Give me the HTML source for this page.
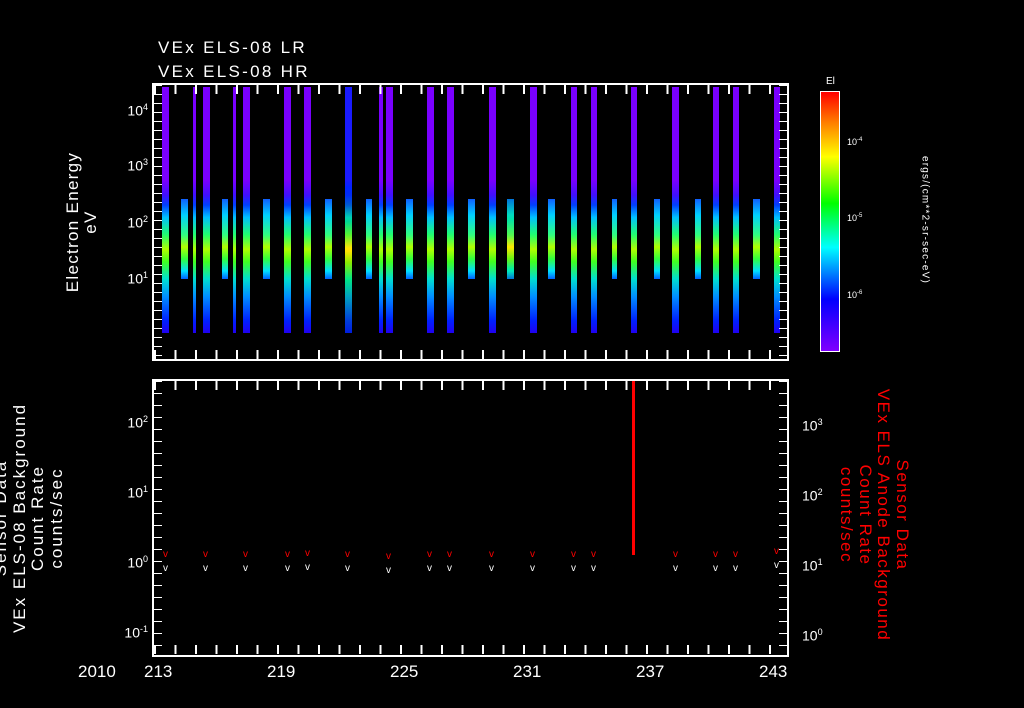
<!DOCTYPE html>
<html><head><meta charset="utf-8"><style>
body{margin:0;background:#000;width:1024px;height:708px;overflow:hidden;position:relative;font-family:"Liberation Sans",sans-serif;color:#fff}
div{position:absolute}
.t{white-space:nowrap;font-size:16px}
.box{border:2px solid #fff;box-sizing:border-box}
.f{top:87px;height:246px;background:linear-gradient(#7a00ff 0,#7a00ff 38%,#4010ff 44%,#0040ff 48%,#00c0ff 53%,#20ff70 60%,#b0ff00 66%,#40ff20 71%,#00e0d0 78%,#0090ff 85%,#0020ff 95%,#2000f0 100%)}
.s{top:199px;height:80px;background:linear-gradient(#1060ff 0,#00d0ff 20%,#30ff80 45%,#b0ff00 60%,#30ff40 75%,#00e0ff 90%,#0060ff 100%)}
.yl{font-size:14px;text-align:right;width:40px}
.yl sup{font-size:9px}
.r{color:#f00}
.tx{height:9px;width:633px;left:154px;background:repeating-linear-gradient(90deg,#fff 0,#fff 2px,transparent 2px,transparent 20.5px)}
.ty{width:8px;height:274px;top:0;background:repeating-linear-gradient(#fff 0,#fff 1px,transparent 1px,transparent 14px)}
</style></head><body>
<div class="t" style="left:158px;top:38px;font-size:17px;letter-spacing:2.3px">VEx ELS-08 LR</div>
<div class="t" style="left:158px;top:62px;font-size:17px;letter-spacing:2.3px">VEx ELS-08 HR</div>

<div class="f" style="left:162px;width:7px"></div>
<div class="s" style="left:181px;width:7px"></div>
<div class="f" style="left:193px;width:3px"></div>
<div class="f" style="left:203px;width:7px"></div>
<div class="s" style="left:222px;width:6px"></div>
<div class="f" style="left:233px;width:3px"></div>
<div class="f" style="left:243px;width:7px"></div>
<div class="s" style="left:263px;width:7px"></div>
<div class="f" style="left:284px;width:7px"></div>
<div class="f" style="left:304px;width:7px"></div>
<div class="s" style="left:325px;width:7px"></div>
<div class="f" style="left:345px;width:7px;filter:hue-rotate(-25deg)"></div>
<div class="s" style="left:366px;width:6px"></div>
<div class="f" style="left:379px;width:4px"></div>
<div class="f" style="left:386px;width:7px"></div>
<div class="s" style="left:406px;width:7px"></div>
<div class="f" style="left:427px;width:7px"></div>
<div class="f" style="left:447px;width:7px"></div>
<div class="s" style="left:468px;width:7px"></div>
<div class="f" style="left:489px;width:7px"></div>
<div class="s" style="left:507px;width:7px;filter:hue-rotate(-20deg)"></div>
<div class="f" style="left:530px;width:7px"></div>
<div class="s" style="left:548px;width:7px"></div>
<div class="f" style="left:571px;width:6px"></div>
<div class="f" style="left:591px;width:6px"></div>
<div class="s" style="left:612px;width:5px"></div>
<div class="f" style="left:631px;width:6px"></div>
<div class="s" style="left:654px;width:6px"></div>
<div class="f" style="left:672px;width:7px"></div>
<div class="s" style="left:695px;width:6px"></div>
<div class="f" style="left:713px;width:6px"></div>
<div class="f" style="left:733px;width:6px"></div>
<div class="s" style="left:753px;width:7px"></div>
<div class="f" style="left:774px;width:6px"></div>

<div class="box" style="left:152px;top:83px;width:637px;height:278px"></div>
<div class="tx" style="top:350px"></div>
<div class="tx" style="top:85px"></div>
<div style="left:154px;top:85px;width:8px;height:274px;background:repeating-linear-gradient(#fff 0,#fff 1px,transparent 1px,transparent 9px)"></div>
<div style="left:779px;top:85px;width:8px;height:274px;background:repeating-linear-gradient(#fff 0,#fff 1px,transparent 1px,transparent 9px)"></div>
<div class="yl" style="left:108px;top:102px">10<sup>4</sup></div>
<div class="yl" style="left:108px;top:157px">10<sup>3</sup></div>
<div class="yl" style="left:108px;top:214px">10<sup>2</sup></div>
<div class="yl" style="left:108px;top:270px">10<sup>1</sup></div>
<div class="t" style="left:82px;top:222px;transform:translate(-50%,-50%) rotate(-90deg);text-align:center;line-height:18px;font-size:17px;letter-spacing:1.3px">Electron Energy<br>eV</div>

<div style="left:820px;top:91px;width:20px;height:261px;border:1px solid #fff;box-sizing:border-box;background:linear-gradient(#ff0000,#ff8000 12%,#ffff00 25%,#00ff00 43%,#00ffff 60%,#0080ff 70%,#0000ff 80%,#8000ff 100%)"></div>
<div class="t" style="left:826px;top:76px;font-size:10px">El</div>
<div class="t" style="left:847px;top:137px;font-size:9px">10<sup style="font-size:6px">-4</sup></div>
<div class="t" style="left:847px;top:213px;font-size:9px">10<sup style="font-size:6px">-5</sup></div>
<div class="t" style="left:847px;top:290px;font-size:9px">10<sup style="font-size:6px">-6</sup></div>
<div class="t" style="left:925px;top:220px;font-size:10px;letter-spacing:1.2px;transform:translate(-50%,-50%) rotate(90deg)">ergs/(cm**2-sr-sec-eV)</div>

<div class="box" style="left:152px;top:379px;width:637px;height:278px"></div>
<div class="tx" style="top:645px"></div>
<div class="tx" style="top:381px"></div>
<div style="left:154px;top:381px;width:8px;height:274px;background:repeating-linear-gradient(#fff 0,#fff 1px,transparent 1px,transparent 12px)"></div>
<div style="left:779px;top:381px;width:8px;height:274px;background:repeating-linear-gradient(#fff 0,#fff 1px,transparent 1px,transparent 12px)"></div>
<div style="left:632px;top:381px;width:3px;height:174px;background:#f00"></div>
<div class="yl" style="left:108px;top:414px">10<sup>2</sup></div>
<div class="yl" style="left:108px;top:484px">10<sup>1</sup></div>
<div class="yl" style="left:108px;top:554px">10<sup>0</sup></div>
<div class="yl" style="left:108px;top:624px">10<sup>-1</sup></div>
<div class="yl" style="left:802px;top:417px;text-align:left">10<sup>3</sup></div>
<div class="yl" style="left:802px;top:487px;text-align:left">10<sup>2</sup></div>
<div class="yl" style="left:802px;top:557px;text-align:left">10<sup>1</sup></div>
<div class="yl" style="left:802px;top:627px;text-align:left">10<sup>0</sup></div>

<div class="t" style="left:163px;top:548px;font-size:10px;line-height:14px"><span class="r">v</span><br>v</div>
<div class="t" style="left:203px;top:548px;font-size:10px;line-height:14px"><span class="r">v</span><br>v</div>
<div class="t" style="left:243px;top:548px;font-size:10px;line-height:14px"><span class="r">v</span><br>v</div>
<div class="t" style="left:285px;top:548px;font-size:10px;line-height:14px"><span class="r">v</span><br>v</div>
<div class="t" style="left:305px;top:547px;font-size:10px;line-height:14px"><span class="r">v</span><br>v</div>
<div class="t" style="left:345px;top:548px;font-size:10px;line-height:14px"><span class="r">v</span><br>v</div>
<div class="t" style="left:386px;top:550px;font-size:10px;line-height:14px"><span class="r">v</span><br>v</div>
<div class="t" style="left:427px;top:548px;font-size:10px;line-height:14px"><span class="r">v</span><br>v</div>
<div class="t" style="left:447px;top:548px;font-size:10px;line-height:14px"><span class="r">v</span><br>v</div>
<div class="t" style="left:489px;top:548px;font-size:10px;line-height:14px"><span class="r">v</span><br>v</div>
<div class="t" style="left:530px;top:548px;font-size:10px;line-height:14px"><span class="r">v</span><br>v</div>
<div class="t" style="left:571px;top:548px;font-size:10px;line-height:14px"><span class="r">v</span><br>v</div>
<div class="t" style="left:591px;top:548px;font-size:10px;line-height:14px"><span class="r">v</span><br>v</div>
<div class="t" style="left:673px;top:548px;font-size:10px;line-height:14px"><span class="r">v</span><br>v</div>
<div class="t" style="left:713px;top:548px;font-size:10px;line-height:14px"><span class="r">v</span><br>v</div>
<div class="t" style="left:733px;top:548px;font-size:10px;line-height:14px"><span class="r">v</span><br>v</div>
<div class="t" style="left:774px;top:545px;font-size:10px;line-height:14px"><span class="r">v</span><br>v</div>

<div class="t" style="left:78px;top:662px;font-size:17px">2010</div>
<div class="t" style="left:144px;top:662px;font-size:17px">213</div>
<div class="t" style="left:267px;top:662px;font-size:17px">219</div>
<div class="t" style="left:390px;top:662px;font-size:17px">225</div>
<div class="t" style="left:513px;top:662px;font-size:17px">231</div>
<div class="t" style="left:636px;top:662px;font-size:17px">237</div>
<div class="t" style="left:759px;top:662px;font-size:17px">243</div>

<div class="t" style="left:29px;top:518px;transform:translate(-50%,-50%) rotate(-90deg);text-align:center;line-height:18.5px;font-size:17px;letter-spacing:2px">Sensor Data<br>VEx ELS-08 Background<br>Count Rate<br>counts/sec</div>
<div class="t r" style="left:874px;top:515px;transform:translate(-50%,-50%) rotate(90deg);text-align:center;line-height:18.5px;font-size:17px;letter-spacing:1.5px">Sensor Data<br>VEx ELS Anode Background<br>Count Rate<br>counts/sec</div>
</body></html>
